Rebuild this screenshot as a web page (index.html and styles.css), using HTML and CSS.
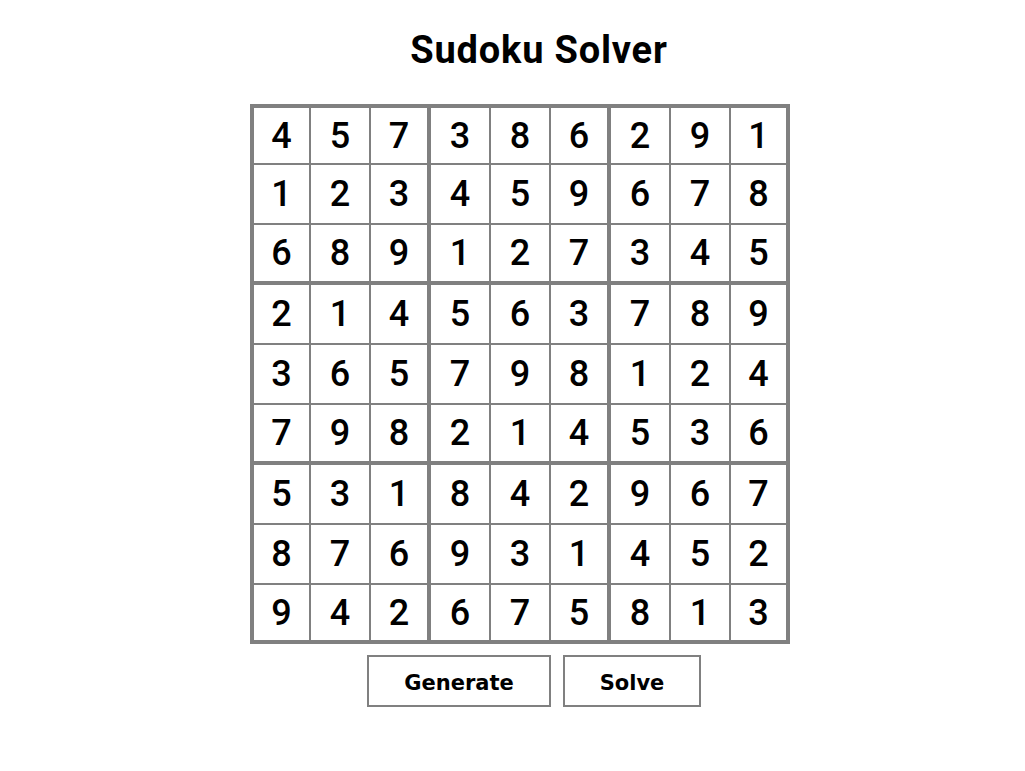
FILE: index.html
```html
<!DOCTYPE html>
<html>
<head>
<meta charset="utf-8">
<title>Sudoku Solver</title>
<link rel="stylesheet" href="styles.css">
</head>
<body>
<div class="app">
  <h1 class="title">Sudoku Solver</h1>
  <div class="board">
    <div class="box"><div class="cell">4</div><div class="cell">5</div><div class="cell">7</div><div class="cell">1</div><div class="cell">2</div><div class="cell">3</div><div class="cell">6</div><div class="cell">8</div><div class="cell">9</div></div>
    <div class="box"><div class="cell">3</div><div class="cell">8</div><div class="cell">6</div><div class="cell">4</div><div class="cell">5</div><div class="cell">9</div><div class="cell">1</div><div class="cell">2</div><div class="cell">7</div></div>
    <div class="box"><div class="cell">2</div><div class="cell">9</div><div class="cell">1</div><div class="cell">6</div><div class="cell">7</div><div class="cell">8</div><div class="cell">3</div><div class="cell">4</div><div class="cell">5</div></div>
    <div class="box"><div class="cell">2</div><div class="cell">1</div><div class="cell">4</div><div class="cell">3</div><div class="cell">6</div><div class="cell">5</div><div class="cell">7</div><div class="cell">9</div><div class="cell">8</div></div>
    <div class="box"><div class="cell">5</div><div class="cell">6</div><div class="cell">3</div><div class="cell">7</div><div class="cell">9</div><div class="cell">8</div><div class="cell">2</div><div class="cell">1</div><div class="cell">4</div></div>
    <div class="box"><div class="cell">7</div><div class="cell">8</div><div class="cell">9</div><div class="cell">1</div><div class="cell">2</div><div class="cell">4</div><div class="cell">5</div><div class="cell">3</div><div class="cell">6</div></div>
    <div class="box"><div class="cell">5</div><div class="cell">3</div><div class="cell">1</div><div class="cell">8</div><div class="cell">7</div><div class="cell">6</div><div class="cell">9</div><div class="cell">4</div><div class="cell">2</div></div>
    <div class="box"><div class="cell">8</div><div class="cell">4</div><div class="cell">2</div><div class="cell">9</div><div class="cell">3</div><div class="cell">1</div><div class="cell">6</div><div class="cell">7</div><div class="cell">5</div></div>
    <div class="box"><div class="cell">9</div><div class="cell">6</div><div class="cell">7</div><div class="cell">4</div><div class="cell">5</div><div class="cell">2</div><div class="cell">8</div><div class="cell">1</div><div class="cell">3</div></div>
  </div>
  <div class="actions">
    <button class="btn btn-generate">Generate</button>
    <button class="btn btn-solve">Solve</button>
  </div>
</div>
</body>
</html>
```

FILE: styles.css
```css
html, body {
  margin: 0;
  padding: 0;
  background: #ffffff;
}

.app {
  width: 540px;
  margin: 0 0 0 250px;
  padding-top: 29px;
  display: flex;
  flex-direction: column;
}

.title {
  margin: 0 0 33px 0;
  padding-left: 38px;
  text-align: center;
  font-family: Roboto, "DejaVu Sans", sans-serif;
  font-weight: 700;
  font-size: 38px;
  letter-spacing: 0.8px;
  line-height: 42px;
  color: #000;
}

.board {
  display: grid;
  grid-template-columns: 173px 176px 175px;
  grid-template-rows: 173px 176px 175px;
  gap: 4px;
  padding: 4px;
  background: #808080;
  width: max-content;
}

.box {
  display: grid;
  gap: 2px;
}

.box:nth-child(3n+1) { grid-template-columns: 55px 58px 56px; }
.box:nth-child(3n+2) { grid-template-columns: 58px 58px 56px; }
.box:nth-child(3n)   { grid-template-columns: 58px 58px 55px; }

.box:nth-child(-n+3) { grid-template-rows: 55px 58px 56px; }
.box:nth-child(n+4):nth-child(-n+6) { grid-template-rows: 58px 58px 56px; }
.box:nth-child(n+7) { grid-template-rows: 58px 58px 55px; }

.cell {
  background: #ffffff;
  display: flex;
  align-items: center;
  justify-content: center;
  font-family: Roboto, "DejaVu Sans", sans-serif;
  font-weight: 500;
  font-size: 36px;
  color: #000;
}

.actions {
  display: flex;
  justify-content: center;
  gap: 12px;
  padding-left: 28px;
  margin-top: 11px;
}

.btn {
  height: 52px;
  border: 2px solid #808080;
  background: #ffffff;
  font-family: "DejaVu Sans", Verdana, sans-serif;
  font-weight: 700;
  font-size: 21px;
  color: #000;
  padding: 3px 0 0 0;
  border-radius: 0;
}

.btn-generate { width: 184px; }
.btn-solve { width: 138px; }
```
